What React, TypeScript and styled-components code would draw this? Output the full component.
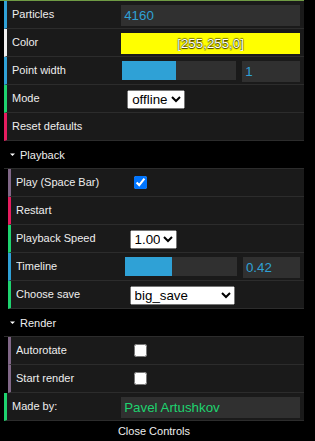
import React from "react";
import styled, { createGlobalStyle } from "styled-components";

const GlobalStyle = createGlobalStyle`
  html, body { margin: 0; padding: 0; background: #000; overflow: hidden; }
  body { font-family: "Liberation Sans", Arial, sans-serif; }
`;

const C = {
  number: "#2fa1d6",
  string: "#1ed36f",
  boolean: "#806787",
  func: "#e61d5f",
  color: "#eee",
};

const Panel = styled.div`
  width: 304px;
  background: #000;
`;

const TopLine = styled.div`
  height: 1px;
  background: #6f9b44;
`;

const List = styled.ul<{ $indent: number }>`
  list-style: none;
  margin: 0;
  padding: 0 0 0 ${(p) => p.$indent}px;
`;

const FolderItem = styled.li`
  margin: 0;
  padding: 0;
`;

const Row = styled.li<{ $accent: string }>`
  display: flex;
  align-items: flex-start;
  height: 27px;
  padding: 0 4px 0 5px;
  background: #1a1a1a;
  border-left: 3px solid ${(p) => p.$accent};
  border-bottom: 1px solid #2c2c2c;
`;

const Label = styled.span<{ $full?: boolean }>`
  flex: 0 0 ${(p) => (p.$full ? "100%" : "40%")};
  line-height: 27px;
  font-size: 11px;
  color: #eee;
  white-space: nowrap;
  overflow: hidden;
`;

const Control = styled.div<{ $split?: boolean }>`
  flex: 0 0 60%;
  min-width: 0;
  display: flex;
  justify-content: ${(p) => (p.$split ? "space-between" : "flex-start")};
  align-items: flex-start;
`;

const TextInput = styled.input<{ $color: string }>`
  box-sizing: border-box;
  width: calc(100% + 6px);
  height: 21px;
  margin: 4px 0 0 -6px;
  padding: 3px;
  border: 0;
  outline: none;
  background: #303030;
  color: ${(p) => p.$color};
  font: 13.333px "Liberation Sans", Arial, sans-serif;
`;

const ColorInput = styled(TextInput)`
  background: #ffff00;
  text-align: center;
  text-shadow: rgba(0, 0, 0, 0.8) 0 1px 1px, rgba(0, 0, 0, 0.6) 0 0 1px,
    rgba(0, 0, 0, 0.5) 0 -1px 1px;
`;

const SmallInput = styled(TextInput)`
  width: calc(30% + 6px);
  margin-left: 0;
`;

const Slider = styled.div`
  flex: none;
  width: 66%;
  height: 19px;
  margin: 4px 0 0 -5px;
  background: #303030;
`;

const SliderFill = styled.div`
  height: 100%;
  background: #2fa1d6;
`;

const Select = styled.select<{ $w: number }>`
  width: ${(p) => p.$w}px;
  height: 19px;
  margin: 5px 0 0 0;
  font: 13.333px "Liberation Sans", Arial, sans-serif;
`;

const Checkbox = styled.input`
  width: 13px;
  height: 13px;
  margin: 7px 3px 3px 4px;
`;

const Title = styled.div`
  display: flex;
  align-items: center;
  gap: 5px;
  height: 27px;
  padding-left: 6px;
  background: #000;
  border-bottom: 1px solid #2c2c2c;
  font-size: 11px;
  color: #eee;
`;

const CloseButton = styled.div`
  margin-left: 4px;
  height: 20px;
  line-height: 20px;
  text-align: center;
  font-size: 11px;
  color: #eee;
  background: #000;
`;

const Triangle = () => (
  <svg width="5" height="5" viewBox="0 0 5 5">
    <polygon points="0,1.5 5,1.5 2.5,4" fill="#fff" />
  </svg>
);

const SliderRow = ({ label, pct, value }: { label: string; pct: number; value: string }) => (
  <Row $accent={C.number}>
    <Label>{label}</Label>
    <Control $split>
      <Slider>
        <SliderFill style={{ width: `${pct}%` }} />
      </Slider>
      <SmallInput $color={C.number} readOnly value={value} />
    </Control>
  </Row>
);

const SelectRow = ({ label, options, value, w }: { label: string; options: string[]; value: string; w: number }) => (
  <Row $accent={C.string}>
    <Label>{label}</Label>
    <Control>
      <Select $w={w} defaultValue={value}>
        {options.map((o) => (
          <option key={o} value={o}>
            {o}
          </option>
        ))}
      </Select>
    </Control>
  </Row>
);

const CheckRow = ({ label, checked }: { label: string; checked: boolean }) => (
  <Row $accent={C.boolean}>
    <Label>{label}</Label>
    <Control>
      <Checkbox type="checkbox" defaultChecked={checked} />
    </Control>
  </Row>
);

const FuncRow = ({ label }: { label: string }) => (
  <Row $accent={C.func}>
    <Label $full>{label}</Label>
  </Row>
);

export default function App() {
  return (
    <>
      <GlobalStyle />
      <Panel>
        <TopLine />
        <List $indent={4}>
          <Row $accent={C.number}>
            <Label>Particles</Label>
            <Control>
              <TextInput $color={C.number} readOnly value="4160" />
            </Control>
          </Row>
          <Row $accent={C.color}>
            <Label>Color</Label>
            <Control>
              <ColorInput $color="#fff" readOnly value="[255,255,0]" />
            </Control>
          </Row>
          <SliderRow label="Point width" pct={47.4} value="1" />
          <SelectRow label="Mode" options={["offline", "online"]} value="offline" w={58} />
          <FuncRow label="Reset defaults" />
          <FolderItem>
            <Title>
              <Triangle />
              Playback
            </Title>
            <List $indent={4}>
              <CheckRow label="Play (Space Bar)" checked />
              <FuncRow label="Restart" />
              <SelectRow label="Playback Speed" options={["0.25", "0.50", "1.00", "2.00"]} value="1.00" w={47} />
              <SliderRow label="Timeline" pct={42} value="0.42" />
              <SelectRow label="Choose save" options={["big_save", "small_save"]} value="big_save" w={105} />
            </List>
          </FolderItem>
          <FolderItem>
            <Title>
              <Triangle />
              Render
            </Title>
            <List $indent={4}>
              <CheckRow label="Autorotate" checked={false} />
              <CheckRow label="Start render" checked={false} />
            </List>
          </FolderItem>
          <Row $accent={C.string}>
            <Label>Made by:</Label>
            <Control>
              <TextInput $color={C.string} readOnly value="Pavel Artushkov" />
            </Control>
          </Row>
        </List>
        <CloseButton>Close Controls</CloseButton>
      </Panel>
    </>
  );
}
